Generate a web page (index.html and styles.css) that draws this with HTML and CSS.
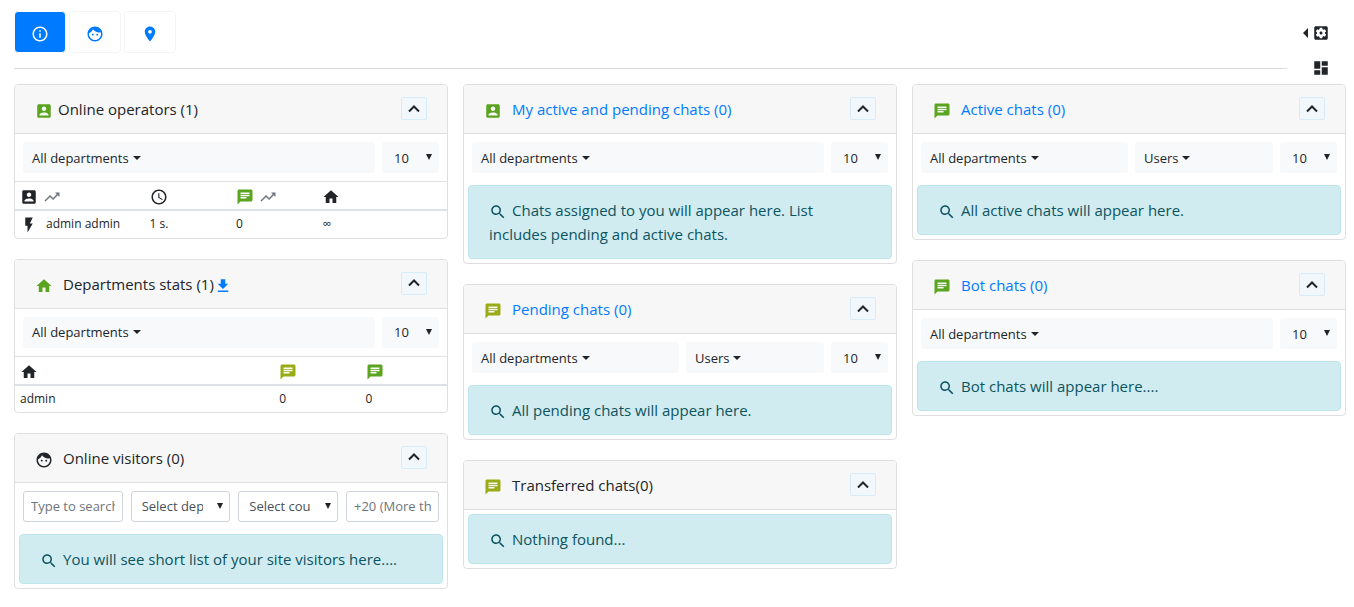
FILE: index.html
```html
<!DOCTYPE html>
<html lang="en">
<head>
<meta charset="utf-8">
<meta name="viewport" content="width=device-width, initial-scale=1">
<title>Dashboard</title>
<link rel="stylesheet" href="styles.css">
</head>
<body>
<svg class="sprite" aria-hidden="true">
  <symbol id="info" viewBox="0 0 24 24"><path d="M11 17h2v-6h-2v6zm1-15C6.480 2 2 6.480 2 12s4.480 10 10 10 10-4.480 10-10S17.520 2 12 2zm0 18c-4.410 0-8-3.590-8-8s3.590-8 8-8 8 3.590 8 8-3.590 8-8 8zM11 9h2V7h-2v2z"/></symbol>
  <symbol id="face" viewBox="0 0 24 24"><path d="M9 11.750c-.69 0-1.250.56-1.250 1.250s.56 1.250 1.250 1.250 1.250-.56 1.250-1.250-.56-1.250-1.250-1.250zm6 0c-.69 0-1.250.56-1.250 1.250s.56 1.250 1.250 1.250 1.250-.56 1.250-1.250-.56-1.250-1.250-1.250zM12 2C6.480 2 2 6.480 2 12s4.480 10 10 10 10-4.480 10-10S17.520 2 12 2zm0 18c-4.410 0-8-3.590-8-8 0-.29.02-.58.05-.86 2.360-1.050 4.230-2.980 5.210-5.370C11.070 8.330 14.050 10 17.420 10c.78 0 1.530-.09 2.250-.26.21.71.33 1.470.33 2.260 0 4.410-3.590 8-8 8z"/></symbol>
  <symbol id="place" viewBox="0 0 24 24"><path d="M12 2C8.130 2 5 5.130 5 9c0 5.250 7 13 7 13s7-7.750 7-13c0-3.870-3.130-7-7-7zm0 9.500c-1.380 0-2.500-1.120-2.500-2.500s1.120-2.500 2.500-2.500 2.500 1.120 2.500 2.500-1.120 2.500-2.500 2.500z"/></symbol>
  <symbol id="account" viewBox="0 0 24 24"><path d="M3 5v14c0 1.100.89 2 2 2h14c1.100 0 2-.9 2-2V5c0-1.100-.9-2-2-2H5c-1.110 0-2 .9-2 2zm12 4c0 1.660-1.340 3-3 3s-3-1.340-3-3 1.340-3 3-3 3 1.340 3 3zm-9 8c0-2 4-3.100 6-3.100s6 1.100 6 3.100v1H6v-1z"/></symbol>
  <symbol id="chat" viewBox="0 0 24 24"><path d="M20 2H4c-1.100 0-1.990.9-1.990 2L2 22l4-4h14c1.100 0 2-.9 2-2V4c0-1.100-.9-2-2-2zM6 9h12v2H6V9zm8 5H6v-2h8v2zm4-6H6V6h12v2z"/></symbol>
  <symbol id="home" viewBox="0 0 24 24"><path d="M10 20v-6h4v6h5v-8h3L12 3 2 12h3v8z"/></symbol>
  <symbol id="trend" viewBox="0 0 24 24"><path d="M16 6l2.290 2.290-4.880 4.880-4-4L2 16.590 3.410 18l6-6 4 4 6.300-6.290L22 12V6z"/></symbol>
  <symbol id="clock" viewBox="0 0 24 24"><path d="M11.990 2C6.470 2 2 6.480 2 12s4.470 10 9.990 10C17.520 22 22 17.520 22 12S17.520 2 11.990 2zM12 20c-4.420 0-8-3.580-8-8s3.580-8 8-8 8 3.580 8 8-3.580 8-8 8zm.5-13H11v6l5.250 3.150.75-1.230-4.500-2.670z"/></symbol>
  <symbol id="flash" viewBox="0 0 24 24"><path d="M7 2v11h3v9l7-12h-4l4-8z"/></symbol>
  <symbol id="download" viewBox="0 0 24 24"><path d="M19 9h-4V3H9v6H5l7 7 7-7zM5 18v2h14v-2H5z"/></symbol>
  <symbol id="search" viewBox="0 0 24 24"><path d="M15.500 14h-.79l-.28-.27C15.410 12.590 16 11.110 16 9.500 16 5.910 13.090 3 9.500 3S3 5.910 3 9.500 5.910 16 9.500 16c1.610 0 3.090-.59 4.230-1.570l.27.28v.79l5 4.990L20.490 19l-4.990-5zm-6 0C7.010 14 5 11.990 5 9.500S7.010 5 9.500 5 14 7.010 14 9.500 11.990 14 9.500 14z"/></symbol>
  <symbol id="board" viewBox="0 0 24 24"><path d="M3 13h8V3H3v10zm0 8h8v-6H3v6zm10 0h8V11h-8v10zm0-18v6h8V3h-8z"/></symbol>
  <symbol id="settings" viewBox="0 0 24 24"><path d="M12 10c-1.100 0-2 .9-2 2s.9 2 2 2 2-.9 2-2-.9-2-2-2zm7-7H5c-1.110 0-2 .9-2 2v14c0 1.100.89 2 2 2h14c1.110 0 2-.9 2-2V5c0-1.100-.89-2-2-2zm-1.750 9c0 .23-.02.46-.05.68l1.480 1.160c.13.11.17.3.08.45l-1.400 2.420c-.09.15-.27.21-.43.15l-1.740-.7c-.36.28-.76.51-1.180.69l-.26 1.850c-.03.17-.18.3-.35.3h-2.800c-.17 0-.32-.13-.35-.29l-.26-1.850c-.43-.18-.82-.41-1.180-.69l-1.740.7c-.16.06-.34 0-.43-.15l-1.400-2.420c-.09-.15-.05-.34.08-.45l1.480-1.160c-.03-.23-.05-.46-.05-.69 0-.23.02-.46.05-.68l-1.480-1.160c-.13-.11-.17-.3-.08-.45l1.400-2.420c.09-.15.27-.21.43-.15l1.740.7c.36-.28.76-.51 1.180-.69l.26-1.850c.03-.17.18-.3.35-.3h2.800c.17 0 .32.13.35.29l.26 1.850c.43.18.82.41 1.180.69l1.740-.7c.16-.06.34 0 .43.15l1.400 2.420c.09.15.05.34-.08.45l-1.480 1.160c.03.23.05.46.05.69z"/></symbol>
  <symbol id="up" viewBox="0 0 12 8"><path d="M1 6.500 6 1.500l5 5" fill="none" stroke="currentColor" stroke-width="2"/></symbol>
</svg>

<header class="topbar">
  <nav class="tabs" aria-label="Views">
    <button class="tab tab-active" type="button" aria-label="Information"><svg class="icon"><use href="#info"/></svg></button>
    <button class="tab" type="button" aria-label="Visitors"><svg class="icon"><use href="#face"/></svg></button>
    <button class="tab" type="button" aria-label="Map"><svg class="icon"><use href="#place"/></svg></button>
  </nav>
  <div class="tools">
    <button class="tool" type="button" aria-label="Settings"><span class="caret-left"></span><svg class="icon"><use href="#settings"/></svg></button>
    <button class="tool" type="button" aria-label="Layout"><svg class="icon"><use href="#board"/></svg></button>
  </div>
</header>

<main class="columns">
  <div class="column">
    <section class="card">
      <div class="card-header">
        <h2 class="title title-tight"><svg class="icon green"><use href="#account"/></svg>Online operators (1)</h2>
        <button class="collapse" type="button" aria-label="Collapse"><svg class="chevron"><use href="#up"/></svg></button>
      </div>
      <div class="filters">
        <button class="dropdown" type="button">All departments</button>
        <span class="select"><select class="light" aria-label="Rows"><option>10</option></select></span>
      </div>
      <table class="table">
        <thead><tr>
          <th class="w30"><svg class="icon"><use href="#account"/></svg><svg class="icon muted after"><use href="#trend"/></svg></th>
          <th class="w20"><svg class="icon"><use href="#clock"/></svg></th>
          <th class="w20"><svg class="icon green"><use href="#chat"/></svg><svg class="icon muted after"><use href="#trend"/></svg></th>
          <th class="w30"><svg class="icon"><use href="#home"/></svg></th>
        </tr></thead>
        <tbody><tr>
          <td><svg class="icon lead"><use href="#flash"/></svg>admin admin</td>
          <td>1 s.</td><td>0</td><td>∞</td>
        </tr></tbody>
      </table>
    </section>

    <section class="card">
      <div class="card-header">
        <h2 class="title"><svg class="icon green"><use href="#home"/></svg>Departments stats (1)<a href="#" class="download" aria-label="Download"><svg class="icon"><use href="#download"/></svg></a></h2>
        <button class="collapse" type="button" aria-label="Collapse"><svg class="chevron"><use href="#up"/></svg></button>
      </div>
      <div class="filters">
        <button class="dropdown" type="button">All departments</button>
        <span class="select"><select class="light" aria-label="Rows"><option>10</option></select></span>
      </div>
      <table class="table">
        <thead><tr>
          <th class="w60"><svg class="icon"><use href="#home"/></svg></th>
          <th class="w20"><svg class="icon olive"><use href="#chat"/></svg></th>
          <th class="w20"><svg class="icon green"><use href="#chat"/></svg></th>
        </tr></thead>
        <tbody><tr><td>admin</td><td>0</td><td>0</td></tr></tbody>
      </table>
    </section>

    <section class="card">
      <div class="card-header">
        <h2 class="title"><svg class="icon"><use href="#face"/></svg>Online visitors (0)</h2>
        <button class="collapse" type="button" aria-label="Collapse"><svg class="chevron"><use href="#up"/></svg></button>
      </div>
      <div class="filters filters-four">
        <input class="field" type="text" placeholder="Type to search" aria-label="Search">
        <span class="select"><select class="field" aria-label="Department"><option>Select department</option></select></span>
        <span class="select"><select class="field" aria-label="Country"><option>Select country</option></select></span>
        <input class="field" type="text" placeholder="+20 (More than 20 seconds)" aria-label="Time on site">
      </div>
      <p class="notice"><svg class="icon"><use href="#search"/></svg>You will see short list of your site visitors here....</p>
    </section>
  </div>

  <div class="column">
    <section class="card">
      <div class="card-header">
        <h2 class="title"><svg class="icon green"><use href="#account"/></svg><a href="#">My active and pending chats (0)</a></h2>
        <button class="collapse" type="button" aria-label="Collapse"><svg class="chevron"><use href="#up"/></svg></button>
      </div>
      <div class="filters">
        <button class="dropdown" type="button">All departments</button>
        <span class="select"><select class="light" aria-label="Rows"><option>10</option></select></span>
      </div>
      <p class="notice"><svg class="icon"><use href="#search"/></svg>Chats assigned to you will appear here. List includes pending and active chats.</p>
    </section>

    <section class="card">
      <div class="card-header">
        <h2 class="title"><svg class="icon olive"><use href="#chat"/></svg><a href="#">Pending chats (0)</a></h2>
        <button class="collapse" type="button" aria-label="Collapse"><svg class="chevron"><use href="#up"/></svg></button>
      </div>
      <div class="filters filters-three">
        <button class="dropdown" type="button">All departments</button>
        <button class="dropdown" type="button">Users</button>
        <span class="select"><select class="light" aria-label="Rows"><option>10</option></select></span>
      </div>
      <p class="notice"><svg class="icon"><use href="#search"/></svg>All pending chats will appear here.</p>
    </section>

    <section class="card">
      <div class="card-header">
        <h2 class="title"><svg class="icon olive"><use href="#chat"/></svg>Transferred chats(0)</h2>
        <button class="collapse" type="button" aria-label="Collapse"><svg class="chevron"><use href="#up"/></svg></button>
      </div>
      <p class="notice"><svg class="icon"><use href="#search"/></svg>Nothing found...</p>
    </section>
  </div>

  <div class="column">
    <section class="card">
      <div class="card-header">
        <h2 class="title"><svg class="icon green"><use href="#chat"/></svg><a href="#">Active chats (0)</a></h2>
        <button class="collapse" type="button" aria-label="Collapse"><svg class="chevron"><use href="#up"/></svg></button>
      </div>
      <div class="filters filters-three">
        <button class="dropdown" type="button">All departments</button>
        <button class="dropdown" type="button">Users</button>
        <span class="select"><select class="light" aria-label="Rows"><option>10</option></select></span>
      </div>
      <p class="notice"><svg class="icon"><use href="#search"/></svg>All active chats will appear here.</p>
    </section>

    <section class="card">
      <div class="card-header">
        <h2 class="title"><svg class="icon green"><use href="#chat"/></svg><a href="#">Bot chats (0)</a></h2>
        <button class="collapse" type="button" aria-label="Collapse"><svg class="chevron"><use href="#up"/></svg></button>
      </div>
      <div class="filters">
        <button class="dropdown" type="button">All departments</button>
        <span class="select"><select class="light" aria-label="Rows"><option>10</option></select></span>
      </div>
      <p class="notice"><svg class="icon"><use href="#search"/></svg>Bot chats will appear here....</p>
    </section>
  </div>
</main>
</body>
</html>
```

FILE: styles.css
```css
*, *::before, *::after { box-sizing: border-box; }

body {
  margin: 0;
  padding: 0 8px 16px 14px;
  background: #fff;
  color: #212529;
  font: 15px/24px "Open Sans", "Noto Sans", sans-serif;
}

button, input, select { font: inherit; color: inherit; margin: 0; }
button { cursor: pointer; }
a { color: #007bff; text-decoration: none; }

.sprite { display: none; }
.icon { width: 18px; height: 18px; fill: currentColor; flex: none; vertical-align: middle; }
.green { color: #5ba41f; }
.olive { color: #9aac15; }
.muted { color: #6c757d; }

.topbar { display: flex; align-items: flex-start; height: 84px; }
.tabs {
  flex: 1;
  display: flex;
  gap: 3px;
  padding: 11px 0 15px;
  border-bottom: 1px solid #dcdcdc;
}
.tab {
  display: flex;
  align-items: center;
  justify-content: center;
  width: 52px;
  height: 42px;
  padding: 4px 0 0;
  border: 1px solid #f4f4f4;
  border-radius: 4px;
  background: #fff;
  color: #007bff;
}
.tab-active { background: #007bff; border-color: #fff; color: #fff; }
.tools {
  width: 59px;
  padding: 24px 16px 0 0;
  display: flex;
  flex-direction: column;
  align-items: flex-end;
  gap: 17px;
}
.tool { display: flex; align-items: center; gap: 4px; padding: 0; border: 0; background: none; }
.caret-left { border: 5px solid transparent; border-right-color: #212529; border-left: 0; }

.columns { display: grid; grid-template-columns: repeat(3, minmax(0, 1fr)); gap: 15px; align-items: start; }
.column { display: flex; flex-direction: column; gap: 20px; }

.card { border: 1px solid #dfdfdf; border-radius: 4px; overflow: hidden; }
.card-header {
  display: flex;
  align-items: flex-start;
  justify-content: space-between;
  padding: 12px 20px;
  border-bottom: 1px solid #dfdfdf;
  background: #f7f7f7;
}
.title { display: flex; align-items: center; gap: 10px; margin: 0; font-size: 15px; font-weight: 400; line-height: 24px; }
.title .icon { margin-top: 4px; }
.title-tight { gap: 5px; }
.download { display: flex; margin-left: -10px; }
.collapse {
  display: flex;
  align-items: center;
  justify-content: center;
  width: 26px;
  height: 23px;
  padding: 0;
  border: 1px solid #d6ecf8;
  border-radius: 2px;
  background: #f2f7fb;
}
.chevron { width: 12px; height: 8px; }

.filters { display: grid; grid-template-columns: minmax(0, 1fr) 57px; gap: 7px; padding: 8px; font-size: 13px; }
.filters-three { grid-template-columns: minmax(0, 3fr) minmax(0, 2fr) 57px; }
.filters-four { grid-template-columns: repeat(3, minmax(0, 1fr)) 93px; gap: 8px; }

.dropdown, .light, .field { height: 31px; border-radius: 3px; min-width: 0; width: 100%; }
.dropdown {
  display: flex;
  align-items: center;
  gap: 4px;
  padding: 0 9px;
  border: 0;
  background: #f8f9fa;
}
.dropdown::after { content: ""; border: 4px solid transparent; border-top-color: #212529; border-bottom: 0; }
.light { border: 0; background: #f8f9fa; padding: 0 20px 0 12px; appearance: none; }
.field { border: 1px solid #ced4da; background: #fff; color: #495057; padding: 0 7px; }
.field::placeholder { color: #6c757d; opacity: 1; }
select.field { padding: 0 26px 0 10px; appearance: none; }

.select { display: grid; }
.select > *, .select::after { grid-area: 1 / 1; }
.select::after {
  content: "";
  align-self: center;
  justify-self: end;
  margin: 0 7px 1px 0;
  border: 3px solid transparent;
  border-top: 6px solid #212529;
  border-bottom: 0;
  pointer-events: none;
}

.table { width: 100%; table-layout: fixed; border-collapse: separate; border-spacing: 0; font-size: 12px; line-height: 18px; }
.table th { height: 30px; padding: 4px 5px 2px; border-top: 1px solid #dee2e6; border-bottom: 2px solid #dee2e6; text-align: left; font-weight: 400; }
.table td { padding: 4px 5px; }
.table .icon { display: inline-block; vertical-align: middle; }
.after { margin-left: 5px; }
.lead { margin-right: 8px; }
.w20 { width: 20%; }
.w30 { width: 30%; }
.w60 { width: 60%; }

.notice {
  margin: 4px;
  padding: 12px 20px;
  border: 1px solid #bee5eb;
  border-radius: 4px;
  background: #d1ecf1;
  color: #0c5460;
}
.notice .icon { margin-right: 5px; }
```
